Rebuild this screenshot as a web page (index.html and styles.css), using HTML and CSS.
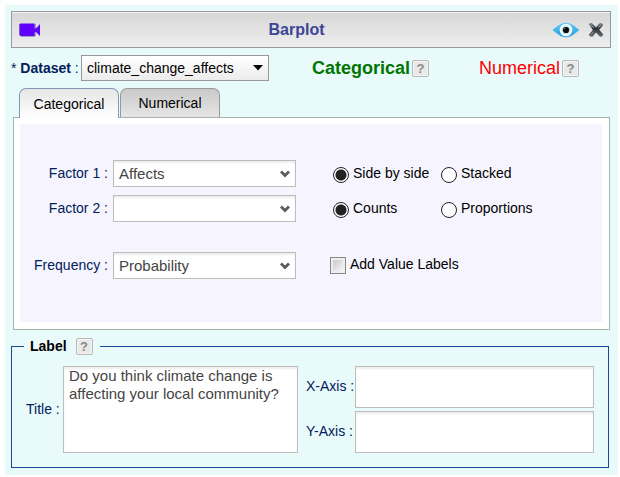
FILE: index.html
```html
<!DOCTYPE html>
<html lang="en">
<head>
<meta charset="utf-8">
<title>Barplot</title>
<link rel="stylesheet" href="styles.css">
</head>
<body>
<main class="dialog">
  <header class="titlebar">
    <svg class="camera" width="22" height="14" viewBox="0 0 22 14" aria-hidden="true"><path d="M1.500 0.500H15.500V4.500L16.500 6L21 1V13L16.500 8.500L15.500 10V13H1.500L0.500 12V1.500Z" fill="#6200ff"/><path d="M1 1V12L2 13H16V9.500L17.500 7L16 4V1" fill="none" stroke="#4b22b8" stroke-width="0.800"/></svg>
    <h1 class="title">Barplot</h1>
    <button class="icon-button" type="button" aria-label="Preview">
      <svg width="28" height="16" viewBox="0 0 28 16">
        <defs><linearGradient id="iris" x1="0" y1="0" x2="0" y2="1"><stop offset="0" stop-color="#62cdf5"/><stop offset="1" stop-color="#209bdc"/></linearGradient></defs>
        <path d="M0.500 8C5 5 8 0.800 14 0.800S23 5 27.500 8C23 11 20 15.200 14 15.200S5 11 0.500 8Z" fill="url(#iris)"/>
        <circle cx="14" cy="8" r="6.300" fill="#fff"/><circle cx="14" cy="8" r="4.700" fill="#c3e6f3"/><circle cx="14" cy="8" r="3.100" fill="#080808"/><circle cx="12.800" cy="6.800" r="0.700" fill="#777"/>
      </svg>
    </button>
    <button class="icon-button" type="button" aria-label="Close">
      <svg width="16" height="16" viewBox="0 0 16 16">
        <defs><linearGradient id="steel" x1="0" y1="0" x2="0" y2="1"><stop offset="0" stop-color="#7c858c"/><stop offset="0.400" stop-color="#2c3236"/><stop offset="1" stop-color="#676d71"/></linearGradient></defs>
        <path d="M1 2.500Q2 0.700 4 1.200L8 5.200L11.500 1.200Q14 0.500 15.200 3L11.200 7.700L15.300 12.500Q14.500 15 12 14.700L8 10.600L4.500 14.800Q2 15.200 0.800 12.800L4.900 8Z" fill="url(#steel)"/>
        <path d="M2.500 2.700L5.500 5.800M13 2.800L10.500 5.500M3 12.700L6 9.500" stroke="#a9b2b8" stroke-width="0.900" fill="none"/>
      </svg>
    </button>
  </header>

  <div class="dataset-row">
    <label class="dataset-label" for="dataset">* <b>Dataset</b> :</label>
    <span class="picker picker-dataset">
      <select id="dataset"><option>climate_change_affects</option></select>
      <svg class="arrow" width="10" height="6" viewBox="0 0 10 6"><path d="M0 0H10L5 5.500Z" fill="#000"/></svg>
    </span>
    <div class="kind kind-categorical">Categorical <button class="help" type="button">?</button></div>
    <div class="kind kind-numerical">Numerical <button class="help" type="button">?</button></div>
  </div>

  <div class="tabs" role="tablist">
    <button class="tab tab-active" type="button" role="tab" aria-selected="true">Categorical</button>
    <button class="tab" type="button" role="tab" aria-selected="false">Numerical</button>
  </div>

  <section class="tab-panel">
    <form class="form">
      <label class="field-label" for="factor1">Factor 1 :</label>
      <span class="picker">
        <select id="factor1"><option>Affects</option></select>
        <svg class="arrow" width="10" height="8" viewBox="0 0 10 8"><path d="M1 1.500L5 5.500L9 1.500" fill="none" stroke="#5b5b5b" stroke-width="2.800"/></svg>
      </span>
      <div class="choices">
        <label class="choice"><input type="radio" name="layout" checked><span>Side by side</span></label>
        <label class="choice"><input type="radio" name="layout"><span>Stacked</span></label>
      </div>

      <label class="field-label" for="factor2">Factor 2 :</label>
      <span class="picker">
        <select id="factor2"><option></option></select>
        <svg class="arrow" width="10" height="8" viewBox="0 0 10 8"><path d="M1 1.500L5 5.500L9 1.500" fill="none" stroke="#5b5b5b" stroke-width="2.800"/></svg>
      </span>
      <div class="choices">
        <label class="choice"><input type="radio" name="measure" checked><span>Counts</span></label>
        <label class="choice"><input type="radio" name="measure"><span>Proportions</span></label>
      </div>

      <label class="field-label row-apart" for="frequency">Frequency :</label>
      <span class="picker row-apart">
        <select id="frequency"><option>Probability</option></select>
        <svg class="arrow" width="10" height="8" viewBox="0 0 10 8"><path d="M1 1.500L5 5.500L9 1.500" fill="none" stroke="#5b5b5b" stroke-width="2.800"/></svg>
      </span>
      <label class="check row-apart"><input type="checkbox"><span>Add Value Labels</span></label>
    </form>
  </section>

  <fieldset class="labels">
    <legend>Label <button class="help" type="button">?</button></legend>
    <div class="labels-grid">
      <label for="plot-title">Title :</label>
      <textarea class="plot-title" id="plot-title">Do you think climate change is affecting your local community?</textarea>
      <div class="axes">
        <label for="x-axis">X-Axis :</label>
        <textarea id="x-axis"></textarea>
        <label for="y-axis">Y-Axis :</label>
        <textarea id="y-axis"></textarea>
      </div>
    </div>
  </fieldset>
</main>
</body>
</html>
```
FILE: styles.css
```css
* {
  box-sizing: border-box;
}

body {
  margin: 0;
  padding: 5px 2px 2px 5px;
  background: #fff;
  color: #00205b;
  font: 14px/18px "Liberation Sans", Arial, sans-serif;
}

button,
select,
textarea {
  font: inherit;
}

.dialog {
  padding: 6px 7px 7px 6px;
  background: #e9fafa;
}

.titlebar {
  display: flex;
  align-items: center;
  gap: 8px;
  height: 37px;
  padding: 0 6px 0 7px;
  border: 1px solid #999;
  background: linear-gradient(#d6d6d6, #eee);
  box-shadow: inset 0 1px #f2f2f2;
}

.title {
  flex: 1;
  margin: 0;
  color: #3c4598;
  font-size: 16px;
  text-align: center;
}

.icon-button {
  padding: 0;
  border: 0;
  background: none;
}

.icon-button svg,
.camera {
  display: block;
}

.dataset-row {
  display: flex;
  align-items: center;
  margin-top: 7px;
}

.dataset-label {
  width: 70px;
  white-space: nowrap;
}

.picker {
  display: block;
  position: relative;
}

.picker select {
  display: block;
  appearance: none;
  width: 100%;
  height: 27px;
  padding: 0 24px 0 5px;
  border: 1px solid #bdbdbd;
  border-radius: 0;
  background: #fff;
  box-shadow: inset 0 2px 2px #eee;
  color: #444;
  font-size: 15px;
}

.arrow {
  position: absolute;
  top: 10px;
  right: 6px;
  pointer-events: none;
}

.picker-dataset {
  width: 188px;
}

.picker-dataset select {
  height: 26px;
  border-color: #999;
  background: linear-gradient(#fff, #ececec);
  box-shadow: none;
  color: #000;
  font-size: 14px;
}

.kind {
  display: flex;
  align-items: center;
  gap: 2px;
  font-size: 18px;
}

.kind-categorical {
  margin-left: 43px;
  color: #007500;
  font-weight: bold;
}

.kind-numerical {
  margin-left: 50px;
  color: #f00;
}

.help {
  display: inline-block;
  width: 17px;
  height: 17px;
  padding: 0;
  border: 1px solid #b8b8b8;
  border-radius: 2px;
  background: #e9e9e9;
  box-shadow: inset 0 0 0 1px #f5f5f5;
  color: #888;
  font: bold 13px/15px "Liberation Sans", Arial, sans-serif;
}

.tabs {
  display: flex;
  gap: 1px;
  margin-top: 7px;
  padding-left: 8px;
}

.tab {
  width: 100px;
  height: 29px;
  padding: 0;
  border: 1px solid #999;
  border-bottom: 0;
  border-radius: 7px 7px 0 0;
  background: linear-gradient(#c9c9c9, #e6e6e6);
  color: #000;
}

.tab-active {
  height: 30px;
  margin-bottom: -1px;
  border-color: #8299b5;
  background: linear-gradient(#e6e6e6, #fff);
  z-index: 1;
}

.tab-panel {
  margin: 0 1px 0 2px;
  padding: 6px 7px 7px 6px;
  border: 1px solid #a8b3b0;
  background: #fff;
}

.form {
  display: grid;
  grid-template-columns: 88px 183px 1fr;
  column-gap: 5px;
  row-gap: 8px;
  padding: 36px 0 43px;
  background: #f6f5ff;
}

.field-label {
  line-height: 27px;
  text-align: right;
}

.row-apart {
  margin-top: 22px;
}

.choices {
  display: flex;
  margin-left: 32px;
  color: #000;
}

.choice {
  display: flex;
  gap: 4px;
  width: 108px;
  line-height: 27px;
  white-space: nowrap;
}

.choice input {
  appearance: none;
  flex: none;
  width: 16px;
  height: 16px;
  margin: 7px 0 0;
  border: 1px solid #222;
  border-radius: 50%;
  background: #fff;
}

.choice input:checked {
  background: radial-gradient(circle, #222 5px, #fff 6px);
}

.check {
  display: flex;
  align-items: center;
  gap: 4px;
  margin-left: 29px;
  color: #000;
  line-height: 24px;
}

.check span {
  align-self: flex-start;
}

.check input {
  appearance: none;
  width: 16px;
  height: 17px;
  margin: 0;
  border: 1px solid #888;
  background: linear-gradient(135deg, #bcc0c6, #fff);
  box-shadow: inset 0 0 0 2px #eee;
}

.labels {
  margin: 7px 2px 0 0;
  padding: 11px 14px 14px;
  border: 1px solid #174a91;
}

.labels legend {
  display: flex;
  align-items: center;
  gap: 9px;
  margin-left: -2px;
  padding: 0 7px 0 6px;
  color: #000;
  font-weight: bold;
}

.labels-grid {
  display: grid;
  grid-template-columns: 33px 235px 1fr;
  align-items: center;
  column-gap: 4px;
  white-space: nowrap;
}

.axes {
  display: grid;
  grid-template-columns: 45px 1fr;
  align-items: center;
  gap: 3px 4px;
  margin-left: 4px;
}

.labels-grid label {
  padding-bottom: 2px;
}

textarea {
  display: block;
  width: 100%;
  height: 42px;
  padding: 0 5px;
  border: 1px solid #bdbdbd;
  background: #fff;
  box-shadow: inset 0 2px 2px #eee;
  color: #444;
  font-size: 15px;
  white-space: pre-wrap;
  resize: none;
}

.plot-title {
  height: 87px;
}
```
